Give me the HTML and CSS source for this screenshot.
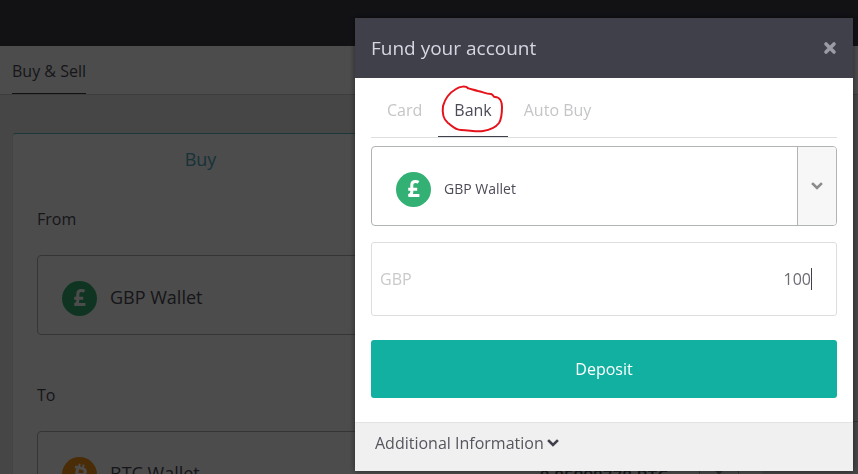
FILE: index.html
```html
<!DOCTYPE html>
<html lang="en">
<head>
    <meta charset="UTF-8">
    <meta name="viewport" content="width=device-width, initial-scale=1.0">
    <title>Fund your account</title>
    <link rel="stylesheet" href="styles.css">
</head>
<body>

    <svg class="sprite" aria-hidden="true">
        <symbol id="pound" viewBox="0 0 35 35">
            <circle cx="17.5" cy="17.5" r="17.5" fill="#33b073"/>
            <path d="M22.600 10.300C21.400 9.600 20.300 9.400 19.300 9.400C16.900 9.400 15.800 10.800 15.800 13V20C15.800 21.800 14.800 23 12.400 23.600H23.400M12.200 17.200H21.200" fill="none" stroke="#fff" stroke-width="3"/>
        </symbol>
        <symbol id="bitcoin" viewBox="0 0 35 35">
            <circle cx="17.5" cy="17.5" r="17.5" fill="#f7931a"/>
            <g fill="none" stroke="#fff" stroke-width="3" transform="rotate(12 17.5 17.5)">
                <path d="M11.5 11h7c5.500 0 5.500 6.500 0 6.500h-4h4.500c6 0 6 7 0 7h-7.500M14.500 11v13.500"/>
                <path d="M15.500 7v4M19.500 7v4M15.500 24v4M19.500 24v4" stroke-width="2"/>
            </g>
        </symbol>
        <symbol id="chevron" viewBox="0 0 12 8">
            <path d="M2 2l4 4l4-4" fill="none" stroke="currentColor" stroke-width="2.6" stroke-linecap="square"/>
        </symbol>
    </svg>

    <nav class="topbar"></nav>
    <div class="subnav">
        <a class="subnav-link" href="#">Buy &amp; Sell</a>
    </div>

    <main class="page">
        <section class="exchange">
            <div class="exchange-tabs">
                <button class="exchange-tab">Buy</button>
            </div>
            <div class="exchange-body">
                <label class="field-label" for="from">From</label>
                <div class="picker picker-large">
                    <select id="from">
                        <option>GBP Wallet</option>
                    </select>
                    <svg class="coin"><use href="#pound"/></svg>
                    <span class="picker-arrow"><svg class="chevron"><use href="#chevron"/></svg></span>
                </div>
                <label class="field-label" for="to">To</label>
                <div class="picker picker-large">
                    <select id="to">
                        <option>BTC Wallet</option>
                    </select>
                    <svg class="coin"><use href="#bitcoin"/></svg>
                    <span class="balance">0.05998778 BTC</span>
                    <span class="picker-arrow"><svg class="chevron"><use href="#chevron"/></svg></span>
                </div>
            </div>
        </section>
        <aside class="side"></aside>
    </main>

    <div class="overlay">
        <div class="modal" role="dialog" aria-labelledby="modal-title">
            <header class="modal-header">
                <h1 class="modal-title" id="modal-title">Fund your account</h1>
                <button class="close" aria-label="Close">
                    <svg width="14" height="14" viewBox="0 0 14 14">
                        <path d="M3 3l8 8M11 3l-8 8" stroke="currentColor" stroke-width="3.6" stroke-linecap="round"/>
                    </svg>
                </button>
            </header>

            <div class="modal-body">
                <div class="tabs">
                    <button class="tab">Card</button>
                    <button class="tab active">Bank
                        <svg class="ring" viewBox="438 82 70 56">
                            <path d="M468 88C466 86 460 86 456 89C449 93 445 99 443 106C442 113 443 119 448 123C452 126 455 130 461 130C469 130 476 132 483 131C490 130 496 127 499 123C502 118 502 113 502 107C502 102 500 97 495 97C493 97 494 95 491 94C486 94 483 92 478 91C474 90 471 89 467 88"/>
                        </svg>
                    </button>
                    <button class="tab">Auto Buy</button>
                </div>

                <div class="picker">
                    <select aria-label="Wallet">
                        <option>GBP Wallet</option>
                    </select>
                    <svg class="coin"><use href="#pound"/></svg>
                    <span class="picker-arrow"><svg class="chevron"><use href="#chevron"/></svg></span>
                </div>

                <div class="amount">
                    <label for="amount">GBP</label>
                    <input type="text" id="amount" value="100">
                    <span class="caret"></span>
                </div>

                <button class="deposit">Deposit</button>
            </div>

            <button class="more">Additional Information<svg class="chevron"><use href="#chevron"/></svg></button>
        </div>
    </div>

</body>
</html>
```
FILE: styles.css
```css
* {
    box-sizing: border-box;
}
html {
    height: 100%;
    overflow: hidden;
}
body {
    margin: 0;
    height: 100%;
    overflow: hidden;
    background-color: #ebebeb;
    color: #4b4c57;
    font-family: "Open Sans", "Noto Sans", sans-serif;
    font-size: 16px;
    line-height: 24px;
}
button, input, select {
    font: inherit;
    color: inherit;
    background: none;
    border: none;
    padding: 0;
    margin: 0;
}
button, select {
    cursor: pointer;
}
.sprite {
    position: absolute;
    width: 0;
    height: 0;
}

/* page behind the dialog */
.topbar {
    height: 46px;
    background-color: #3c3d48;
}
.subnav {
    display: flex;
    height: 49px;
    padding: 0 12px;
    background-color: white;
    border-bottom: 1px solid #c8cccc;
}
.subnav-link {
    height: 48px;
    padding-top: 13px;
    border-bottom: 1px solid #3c3d48;
    color: inherit;
    text-decoration: none;
}
.page {
    display: flex;
    gap: 24px;
    height: calc(100% - 95px);
    padding-left: 12px;
    overflow: hidden;
}
.exchange {
    flex: 0 0 752px;
    align-self: flex-start;
    margin-top: 38px;
    background-color: white;
    border: 1px solid #dfe3e3;
    border-top-color: #5fb8c0;
    border-radius: 4px;
}
.exchange-tabs {
    display: grid;
    grid-template-columns: 1fr 1fr;
}
.exchange-tab {
    height: 49px;
    font-size: 18px;
    color: #4fa8c0;
}
.exchange-body {
    padding: 24px;
}
.field-label {
    display: block;
    margin-bottom: 24px;
}
.side {
    flex: 1;
    height: 327px;
    border-bottom: 1px solid #a5a9a9;
}

/* wallet drop-down */
.picker {
    display: grid;
    height: 80px;
    align-items: center;
    border: 1px solid #b0b4b4;
    border-radius: 4px;
    background-color: white;
    overflow: hidden;
}
.picker > * {
    grid-area: 1 / 1;
}
.picker select {
    width: 100%;
    height: 78px;
    padding: 6px 40px 0 72px;
    appearance: none;
    outline: none;
    font-size: 14px;
    color: #4b4c57;
}
.picker-large {
    margin-bottom: 48px;
}
.picker-large select {
    padding-top: 4px;
    font-size: 18px;
}
.coin {
    width: 35px;
    height: 35px;
    margin: 6px 0 0 24px;
    pointer-events: none;
}
.picker-arrow {
    display: flex;
    justify-content: center;
    align-items: center;
    justify-self: end;
    width: 39px;
    height: 78px;
    border-left: 1px solid #b0b4b4;
    background-color: #f7f7f7;
    color: #8c8c8e;
    pointer-events: none;
}
.balance {
    justify-self: end;
    padding: 10px 70px 0 0;
    font-size: 17px;
    font-weight: 600;
    pointer-events: none;
}
.chevron {
    width: 12px;
    height: 8px;
}

/* dialog */
.overlay {
    position: fixed;
    inset: 0;
    display: flex;
    justify-content: flex-end;
    align-items: flex-start;
    padding: 18px 5px 0;
    background-color: rgba(0, 0, 0, 0.7);
}
.modal {
    width: 100%;
    max-width: 498px;
    background-color: white;
    box-shadow: 0 0 6px rgba(0, 0, 0, 0.5);
}
.modal-header {
    display: flex;
    justify-content: space-between;
    align-items: center;
    height: 60px;
    padding: 0 16px;
    background-color: #3f404a;
    color: #d5d6e2;
}
.modal-title {
    margin: 0;
    font-size: 19px;
    font-weight: 400;
}
.close {
    display: flex;
    color: #9a9ba5;
}
.modal-body {
    padding: 0 16px 24px;
}
.tabs {
    display: flex;
    height: 60px;
    margin-bottom: 8px;
    border-bottom: 1px solid #dcdee0;
}
.tab {
    position: relative;
    height: 59px;
    padding: 6px 16px 0;
    color: #c4c5c7;
    border-bottom: 1px solid transparent;
}
.tab.active {
    color: #4b4c57;
    border-bottom-color: #3f404a;
}
.ring {
    position: absolute;
    top: 4px;
    left: 0;
    width: 70px;
    height: 56px;
    fill: none;
    stroke: #e5121b;
    stroke-width: 2;
    pointer-events: none;
}
.amount {
    display: flex;
    align-items: center;
    height: 74px;
    margin: 16px 0 24px;
    padding: 0 24px 0 8px;
    border: 1px solid #dcdee0;
    border-radius: 3px;
}
.amount label {
    color: #c8c9cb;
}
.amount input {
    flex: 1;
    min-width: 0;
    text-align: right;
    color: #6b6c74;
    outline: none;
}
.caret {
    width: 1px;
    height: 22px;
    background-color: #3f404a;
}
.deposit {
    width: 100%;
    height: 58px;
    border-radius: 3px;
    background-color: #12b0a1;
    color: white;
    font-weight: 500;
}
.deposit:hover {
    background-color: #0fa093;
}
.more {
    display: block;
    width: 100%;
    padding: 8px 20px 16px;
    border-top: 1px solid #e2e3e3;
    background-color: #f0f0f0;
    color: #55565e;
    text-align: left;
}
.more .chevron {
    margin-left: 3px;
    color: #3f404a;
    vertical-align: 2px;
}
```
